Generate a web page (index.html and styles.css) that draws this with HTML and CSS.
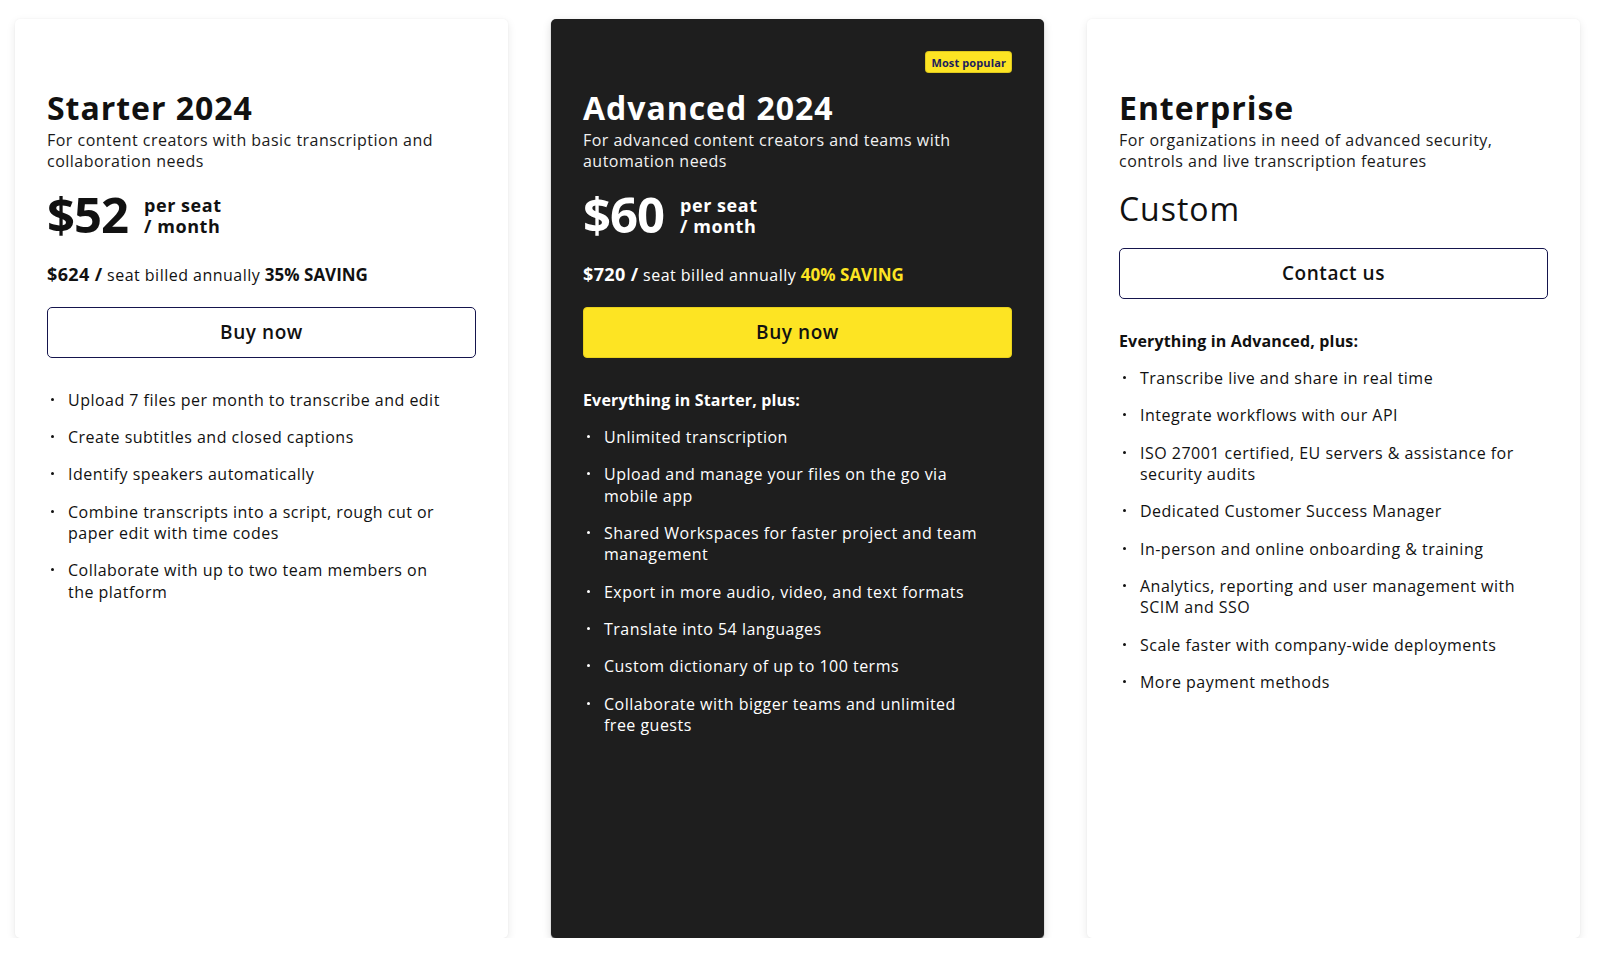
FILE: index.html
```html
<!DOCTYPE html>
<html lang="en">
<head>
<meta charset="utf-8">
<title>Pricing</title>
<link rel="stylesheet" href="styles.css">
</head>
<body>
<main class="pricing">
  <section class="card">
    <div class="tag-row"></div>
    <h2 class="plan-title">Starter 2024</h2>
    <p class="plan-desc">For content creators with basic transcription and collaboration needs</p>
    <div class="price-row"><span class="amount">$52</span><span class="per">per seat<br>/ month</span></div>
    <p class="annual"><b class="annual-price">$624 /</b> seat billed annually <b class="saving">35% SAVING</b></p>
    <button class="btn btn-outline">Buy now</button>
    <ul class="features">
      <li class="feature">Upload 7 files per month to transcribe and edit</li>
      <li class="feature">Create subtitles and closed captions</li>
      <li class="feature">Identify speakers automatically</li>
      <li class="feature">Combine transcripts into a script, rough cut or paper edit with time codes</li>
      <li class="feature">Collaborate with up to two team members on the platform</li>
    </ul>
  </section>

  <section class="card card-dark">
    <div class="tag-row"><span class="badge">Most popular</span></div>
    <h2 class="plan-title">Advanced 2024</h2>
    <p class="plan-desc">For advanced content creators and teams with automation needs</p>
    <div class="price-row"><span class="amount">$60</span><span class="per">per seat<br>/ month</span></div>
    <p class="annual"><b class="annual-price">$720 /</b> seat billed annually <b class="saving">40% SAVING</b></p>
    <button class="btn btn-yellow">Buy now</button>
    <ul class="features">
      <li class="features-head">Everything in Starter, plus:</li>
      <li class="feature">Unlimited transcription</li>
      <li class="feature">Upload and manage your files on the go via mobile app</li>
      <li class="feature">Shared Workspaces for faster project and team management</li>
      <li class="feature">Export in more audio, video, and text formats</li>
      <li class="feature">Translate into 54 languages</li>
      <li class="feature">Custom dictionary of up to 100 terms</li>
      <li class="feature">Collaborate with bigger teams and unlimited free guests</li>
    </ul>
  </section>

  <section class="card">
    <div class="tag-row"></div>
    <h2 class="plan-title">Enterprise</h2>
    <p class="plan-desc">For organizations in need of advanced security, controls and live transcription features</p>
    <div class="custom-price">Custom</div>
    <button class="btn btn-outline btn-contact">Contact us</button>
    <ul class="features">
      <li class="features-head">Everything in Advanced, plus:</li>
      <li class="feature">Transcribe live and share in real time</li>
      <li class="feature">Integrate workflows with our API</li>
      <li class="feature">ISO 27001 certified, EU servers &amp; assistance for security audits</li>
      <li class="feature">Dedicated Customer Success Manager</li>
      <li class="feature">In-person and online onboarding &amp; training</li>
      <li class="feature">Analytics, reporting and user management with SCIM and SSO</li>
      <li class="feature">Scale faster with company-wide deployments</li>
      <li class="feature">More payment methods</li>
    </ul>
  </section>
</main>
</body>
</html>
```

FILE: styles.css
```css
* { box-sizing: border-box; }

html, body {
  margin: 0;
  padding: 0;
  background: #ffffff;
}

body {
  font-family: "Open Sans", "Liberation Sans", sans-serif;
  color: #111111;
  -webkit-font-smoothing: antialiased;
}

.pricing {
  display: grid;
  grid-template-columns: repeat(3, 1fr);
  gap: 43px;
  padding: 19px 20px 0 15px;
}

.card {
  height: 919px;
  padding: 32px 32px 0 32px;
  background: #ffffff;
  border-radius: 5px;
  box-shadow: 0 3px 10px rgba(0, 0, 0, 0.09), 0 0 2px rgba(0, 0, 0, 0.05);
  display: flex;
  flex-direction: column;
  align-items: stretch;
}

.card-dark {
  background: #1e1e1e;
  color: #ffffff;
  box-shadow: 0 3px 10px rgba(0, 0, 0, 0.14), 0 1px 1px rgba(0, 0, 0, 0.6);
}

.tag-row {
  height: 22px;
  margin-bottom: 16px;
  display: flex;
  justify-content: flex-end;
}

.badge {
  display: inline-flex;
  align-items: center;
  height: 22px;
  padding: 0 6px;
  border-radius: 4px;
  background: #fde423;
  color: #1c1c5c;
  font-size: 11px;
  font-weight: 700;
  letter-spacing: 0.01em;
  box-shadow: inset 0 0 0 1px rgba(0, 0, 0, 0.12);
}

.plan-title {
  margin: 0;
  font-size: 32px;
  line-height: 38px;
  font-weight: 700;
  letter-spacing: 0.03em;
}

.plan-desc {
  margin: 3px 0 0 0;
  max-width: 415px;
  font-size: 16px;
  line-height: 20.8px;
  letter-spacing: 0.03em;
  color: #1a1a1a;
}

.card-dark .plan-desc { color: #f2f2f2; }

.price-row {
  margin-top: 14px;
  font-size: 49px;
  line-height: 56px;
  font-weight: 700;
}

.amount { letter-spacing: -1px; }

.per {
  display: inline-block;
  margin-left: 16px;
  font-size: 18px;
  line-height: 21px;
  font-weight: 700;
  letter-spacing: 0.03em;
  vertical-align: baseline;
}

.annual {
  margin: 20px 0 0 0;
  font-size: 16px;
  line-height: 24px;
  letter-spacing: 0.03em;
}

.annual-price {
  font-size: 18px;
  font-weight: 700;
  letter-spacing: 0.02em;
}

.saving {
  font-size: 17px;
  font-weight: 700;
  letter-spacing: 0;
}

.card-dark .saving { color: #fde423; }

.custom-price {
  margin-top: 17px;
  font-size: 32px;
  line-height: 40px;
  font-weight: 400;
  letter-spacing: 0.03em;
}

.btn {
  display: flex;
  align-items: center;
  justify-content: center;
  width: 100%;
  height: 51px;
  margin-top: 20px;
  padding: 0;
  border-radius: 5px;
  font-family: inherit;
  font-size: 19px;
  font-weight: 600;
  letter-spacing: 0.03em;
  color: #111111;
  cursor: pointer;
}

.btn-outline {
  background: #ffffff;
  border: 1px solid #15154d;
}

.btn-contact { margin-top: 19px; }

.btn-yellow {
  background: #fde423;
  border: 1px solid #e9d11c;
  border-radius: 4px;
}

.features {
  list-style: none;
  margin: 32px 0 0 0;
  padding: 0;
  display: flex;
  flex-direction: column;
  gap: 16px;
}

.features-head {
  font-size: 16px;
  line-height: 21.33px;
  font-weight: 700;
  letter-spacing: 0.01em;
}

.feature {
  position: relative;
  max-width: 409px;
  padding-left: 21px;
  font-size: 16px;
  line-height: 21.33px;
  letter-spacing: 0.03em;
}

.feature::before {
  content: "";
  position: absolute;
  left: 4px;
  top: 8px;
  width: 3px;
  height: 3px;
  border-radius: 50%;
  background: currentColor;
}
```
